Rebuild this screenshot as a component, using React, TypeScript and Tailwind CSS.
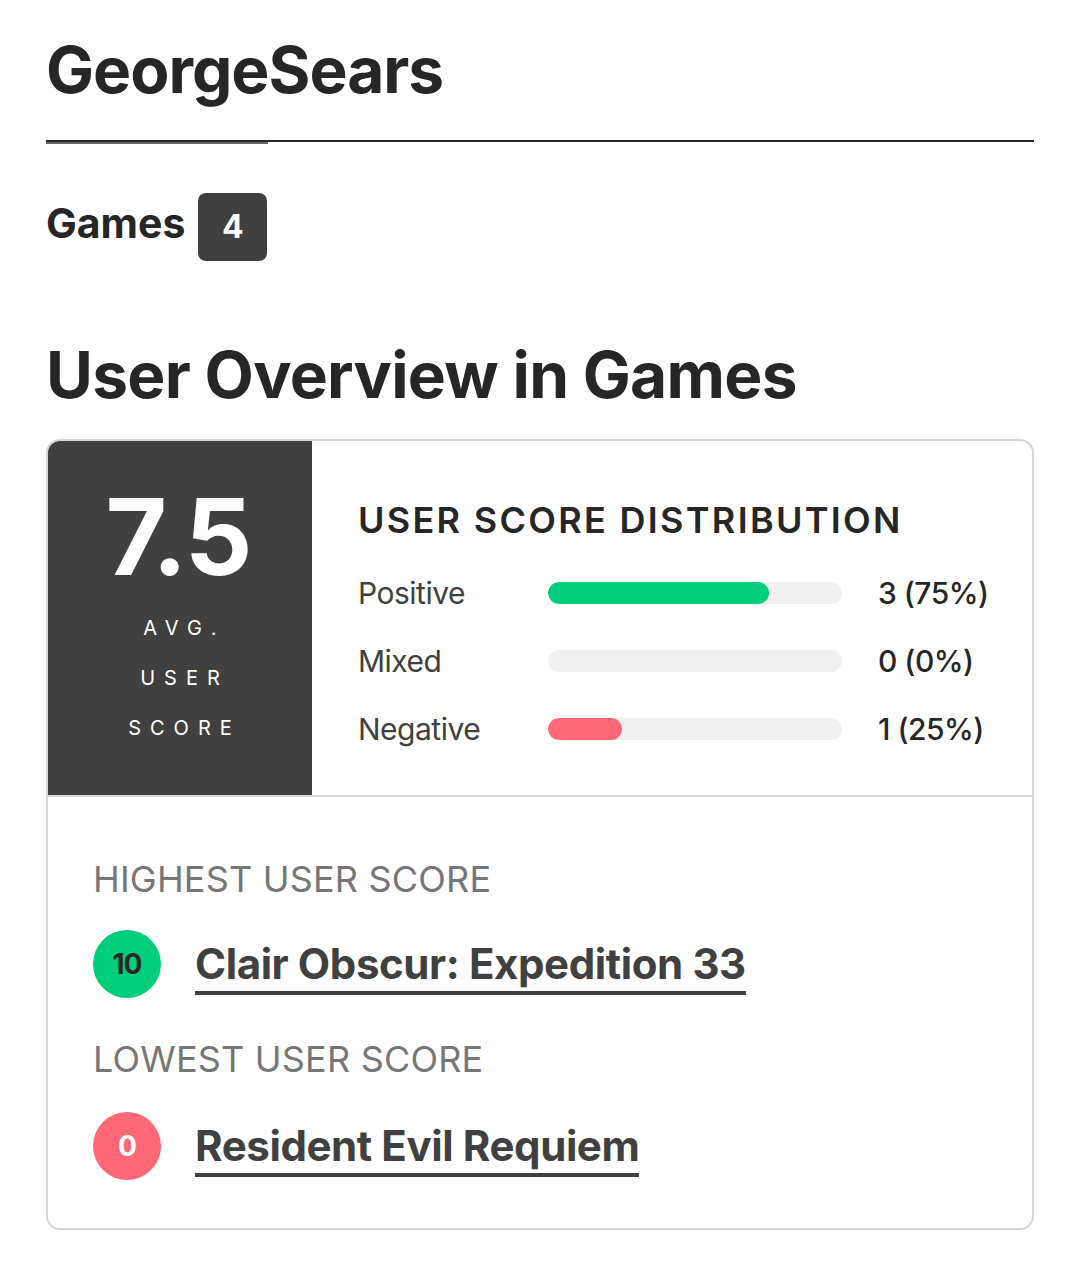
const font = { fontFamily: "Inter, 'Open Sans', sans-serif" };

type Row = { label: string; pct: number; value: string; color: string };

const rows: Row[] = [
  { label: "Positive", pct: 75, value: "3 (75%)", color: "bg-[#00ce7a]" },
  { label: "Mixed", pct: 0, value: "0 (0%)", color: "bg-[#ffbd3f]" },
  { label: "Negative", pct: 25, value: "1 (25%)", color: "bg-[#ff6874]" },
];

function ScoreLink({ score, title, tone }: { score: string; title: string; tone: "good" | "bad" }) {
  return (
    <div className="flex items-start gap-[34px]">
      <div
        className={
          "w-[68px] h-[68px] rounded-full flex items-center justify-center text-[28px] font-bold tracking-[-1px] " +
          (tone === "good" ? "bg-[#00ce7a] text-[#262626]" : "bg-[#ff6874] text-white")
        }
      >
        {score}
      </div>
      <a className="mt-[13px] text-[42px] font-bold text-[#404040] leading-none border-b-[4px] border-[#404040] pb-[6px] tracking-[-0.4px]">
        {title}
      </a>
    </div>
  );
}

export default function App() {
  return (
    <div className="bg-white w-[1080px] min-h-[1274px] px-[46px] pt-[38px]" style={font}>
      <h1 className="text-[64px] font-bold text-[#262626] leading-none tracking-[-1px]">GeorgeSears</h1>

      <div className="mt-[38px] relative h-[4px] border-t-2 border-[#262626]">
        <div className="w-[222px] h-[2px] bg-[#666]" />
      </div>

      <div className="mt-[49px] flex items-center gap-[13px]">
        <span className="text-[41px] font-bold text-[#262626] leading-none pb-[8px]">Games</span>
        <span className="w-[69px] h-[68px] rounded-[8px] bg-[#404040] text-white text-[32px] font-bold flex items-center justify-center">
          4
        </span>
      </div>

      <h2 className="mt-[82px] text-[64px] font-bold text-[#262626] leading-none tracking-[-0.7px]">User Overview in Games</h2>

      <div className="mt-[32px] w-[988px] border-2 border-[#d6d6d6] rounded-[14px] overflow-hidden">
        <div className="flex border-b-2 border-[#d6d6d6]">
          <div className="w-[264px] h-[354px] bg-[#404040] text-white flex flex-col items-center pt-[43px]">
            <div className="text-[106px] font-bold leading-none tracking-[-2px] pr-[4px]">7.5</div>
            <div className="mt-[13px] flex flex-col items-center text-[20px] tracking-[9px] leading-[50px] pl-[9px]">
              <span>AVG.</span>
              <span>USER</span>
              <span>SCORE</span>
            </div>
          </div>
          <div className="flex-1 pl-[46px] pt-[61px]">
            <div className="text-[36px] font-semibold text-[#262626] tracking-[2.3px] leading-none">
              USER SCORE DISTRIBUTION
            </div>
            <div className="mt-[37px] flex flex-col gap-[32px]">
              {rows.map((r) => (
                <div key={r.label} className="flex items-center h-[36px]">
                  <span className="w-[190px] text-[30px] text-[#404040] tracking-[-0.5px]">{r.label}</span>
                  <div className="w-[294px] h-[22px] rounded-full bg-[#f0f0f0] overflow-hidden">
                    <div className={"h-full rounded-full " + r.color} style={{ width: `${r.pct}%` }} />
                  </div>
                  <span className="ml-[36px] text-[30px] font-medium text-[#262626] tracking-[-0.5px]">{r.value}</span>
                </div>
              ))}
            </div>
          </div>
        </div>

        <div className="px-[45px] pt-[64px] pb-[48px]">
          <div className="text-[36px] text-[#767676] leading-none tracking-[0.2px]">HIGHEST USER SCORE</div>
          <div className="mt-[33px]">
            <ScoreLink score="10" title="Clair Obscur: Expedition 33" tone="good" />
          </div>
          <div className="mt-[43px] text-[36px] text-[#767676] leading-none tracking-[0.2px]">LOWEST USER SCORE</div>
          <div className="mt-[35px]">
            <ScoreLink score="0" title="Resident Evil Requiem" tone="bad" />
          </div>
        </div>
      </div>
    </div>
  );
}
